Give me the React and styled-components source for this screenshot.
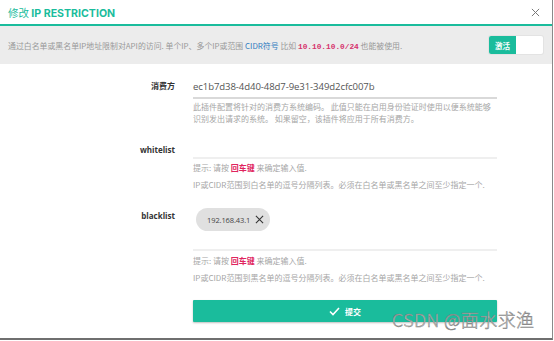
import styled, { createGlobalStyle } from "styled-components";

const GlobalStyle = createGlobalStyle`
  body {
    margin: 0;
    background: #ffffff;
    font-family: "Noto Sans CJK SC", "Noto Sans", sans-serif;
  }
`;

const Modal = styled.div`
  position: relative;
  width: 552px;
  height: 338px;
  border-right: 1px solid #8a8a8a;
  border-bottom: 2px solid #6f6f6f;
  background: #ffffff;
  overflow: hidden;
`;

const Header = styled.div`
  display: flex;
  align-items: center;
  justify-content: space-between;
  height: 24px;
  padding: 0 12px 0 8px;
  border-bottom: 2px solid #1abc9c;
`;

const Title = styled.h1`
  margin: 0;
  font-family: "Noto Sans CJK SC", sans-serif;
  font-size: 10.5px;
  font-weight: 400;
  color: #1abc9c;

  strong {
    font-family: "Inter", "Noto Sans", sans-serif;
    font-weight: 700;
    font-size: 10.6px;
  }
`;

const Close = styled.span`
  color: #777;
  display: flex;
`;

const Band = styled.div`
  display: flex;
  align-items: center;
  justify-content: space-between;
  height: 38px;
  padding: 0 9px 0 8px;
  background: #ececec;
  font-size: 7.9px;
  color: #999;
`;

const Link = styled.span`
  color: #2f7bbf;
`;

const Code = styled.code`
  font-family: "Liberation Mono", monospace;
  font-size: 7.8px;
  font-weight: 700;
  color: #d6336c;
`;

const Toggle = styled.div`
  display: flex;
  width: 54px;
  height: 18px;
  border-radius: 2px;
  background: #fff;
  box-shadow: 0 0 0 1px #e3e3e3;
  overflow: hidden;
`;

const ToggleOn = styled.div`
  width: 27px;
  display: flex;
  align-items: center;
  justify-content: center;
  background: #1abc9c;
  color: #fff;
  font-size: 7.5px;
  font-weight: 700;
`;

const Form = styled.div`
  padding-top: 12px;
`;

const Row = styled.div`
  display: grid;
  grid-template-columns: 175px 304px;
  column-gap: 18px;
  margin-top: ${(p) => p.$top || 0}px;
`;

const Label = styled.div`
  text-align: right;
  font-size: 8px;
  font-weight: 700;
  color: #333;
  font-family: ${(p) => (p.$latin ? '"Open Sans", sans-serif' : '"Noto Sans CJK SC", sans-serif')};
  padding-top: ${(p) => p.$pad || 0}px;
`;

const Field = styled.div`
  display: flex;
  flex-direction: column;
`;

const Input = styled.div`
  display: flex;
  align-items: ${(p) => (p.$top ? "flex-start" : "center")};
  height: ${(p) => p.$h}px;
  border-bottom: 2px solid ${(p) => (p.$light ? "#efefef" : "#d9d9d9")};
  font-family: "Open Sans", sans-serif;
  font-size: 9.6px;
  letter-spacing: -0.1px;
  color: #555;
  padding-left: ${(p) => p.$pl || 0}px;
`;

const Help = styled.p`
  margin: ${(p) => p.$mt || 0}px 0 0;
  font-size: 8px;
  line-height: 12px;
  color: #a6a6a6;
`;

const Key = styled.span`
  color: #e0245e;
  font-weight: 700;
`;

const Chip = styled.div`
  display: inline-flex;
  align-items: center;
  gap: 5px;
  height: 23px;
  padding: 0 6px 0 11px;
  border-radius: 12px;
  background: #e0e0e0;
  font-family: "Open Sans", sans-serif;
  font-size: 7.5px;
  color: #444;
`;

const Submit = styled.button`
  display: flex;
  align-items: center;
  justify-content: center;
  gap: 5px;
  width: 304px;
  height: 22px;
  margin-top: 16px;
  border: 0;
  border-radius: 1px;
  background: #1abc9c;
  color: #fff;
  font-family: "Noto Sans CJK SC", sans-serif;
  font-size: 8px;
  font-weight: 700;
  box-shadow: 0 1px 2px rgba(0, 0, 0, 0.25);
`;

const Watermark = styled.div`
  position: absolute;
  left: 392px;
  top: 306px;
  font-family: "Noto Sans CJK SC", sans-serif;
  font-size: 18px;
  font-weight: 300;
  color: #c4c4c4;
  -webkit-text-stroke: 0.4px #7a7a7a;
  letter-spacing: 0.4px;
`;

const Cross = ({ size = 10, color = "#444", width = 1.4 }) => (
  <svg width={size} height={size} viewBox="0 0 10 10">
    <path d="M1 1L9 9M9 1L1 9" stroke={color} strokeWidth={width} fill="none" />
  </svg>
);

export default function App() {
  return (
    <>
      <GlobalStyle />
      <Modal>
        <Header>
          <Title>
            修改 <strong>IP RESTRICTION</strong>
          </Title>
          <Close>
            <Cross size={9} color="#777" width={1.1} />
          </Close>
        </Header>
        <Band>
          <span>
            通过白名单或黑名单IP地址限制对API的访问. 单个IP、多个IP或范围 <Link>CIDR符号</Link> 比如{" "}
            <Code>10.10.10.0/24</Code> 也能被使用.
          </span>
          <Toggle>
            <ToggleOn>激活</ToggleOn>
          </Toggle>
        </Band>
        <Form>
          <Row>
            <Label $pad={4}>消费方</Label>
            <Field>
              <Input $h={21}>ec1b7d38-4d40-48d7-9e31-349d2cfc007b</Input>
              <Help $mt={2}>
                此插件配置将针对的消费方系统编码。 此值只能在启用身份验证时使用以便系统能够识别发出请求的系统。
                如果留空，该插件将应用于所有消费方。
              </Help>
            </Field>
          </Row>
          <Row $top={17}>
            <Label $latin $pad={2}>whitelist</Label>
            <Field>
              <Input $h={15} $light />
              <Help $mt={3}>
                提示: 请按 <Key>回车键</Key> 来确定输入值.
              </Help>
              <Help $mt={5}>IP或CIDR范围到白名单的逗号分隔列表。必须在白名单或黑名单之间至少指定一个.</Help>
            </Field>
          </Row>
          <Row $top={17}>
            <Label $latin $pad={2}>blacklist</Label>
            <Field>
              <Input $h={41} $light $pl={3} $top>
                <Chip>
                  192.168.43.1
                  <Cross size={9} color="#333" width={1.2} />
                </Chip>
              </Input>
              <Help $mt={4}>
                提示: 请按 <Key>回车键</Key> 来确定输入值.
              </Help>
              <Help $mt={5}>IP或CIDR范围到黑名单的逗号分隔列表。必须在白名单或黑名单之间至少指定一个.</Help>
            </Field>
          </Row>
          <Row>
            <div />
            <Submit>
              <svg width="11" height="9" viewBox="0 0 11 9">
                <path d="M1 4.5L4 7.5L10 1" stroke="#fff" strokeWidth="1.6" fill="none" />
              </svg>
              提交
            </Submit>
          </Row>
        </Form>
        <Watermark>CSDN @面水求渔</Watermark>
      </Modal>
    </>
  );
}
